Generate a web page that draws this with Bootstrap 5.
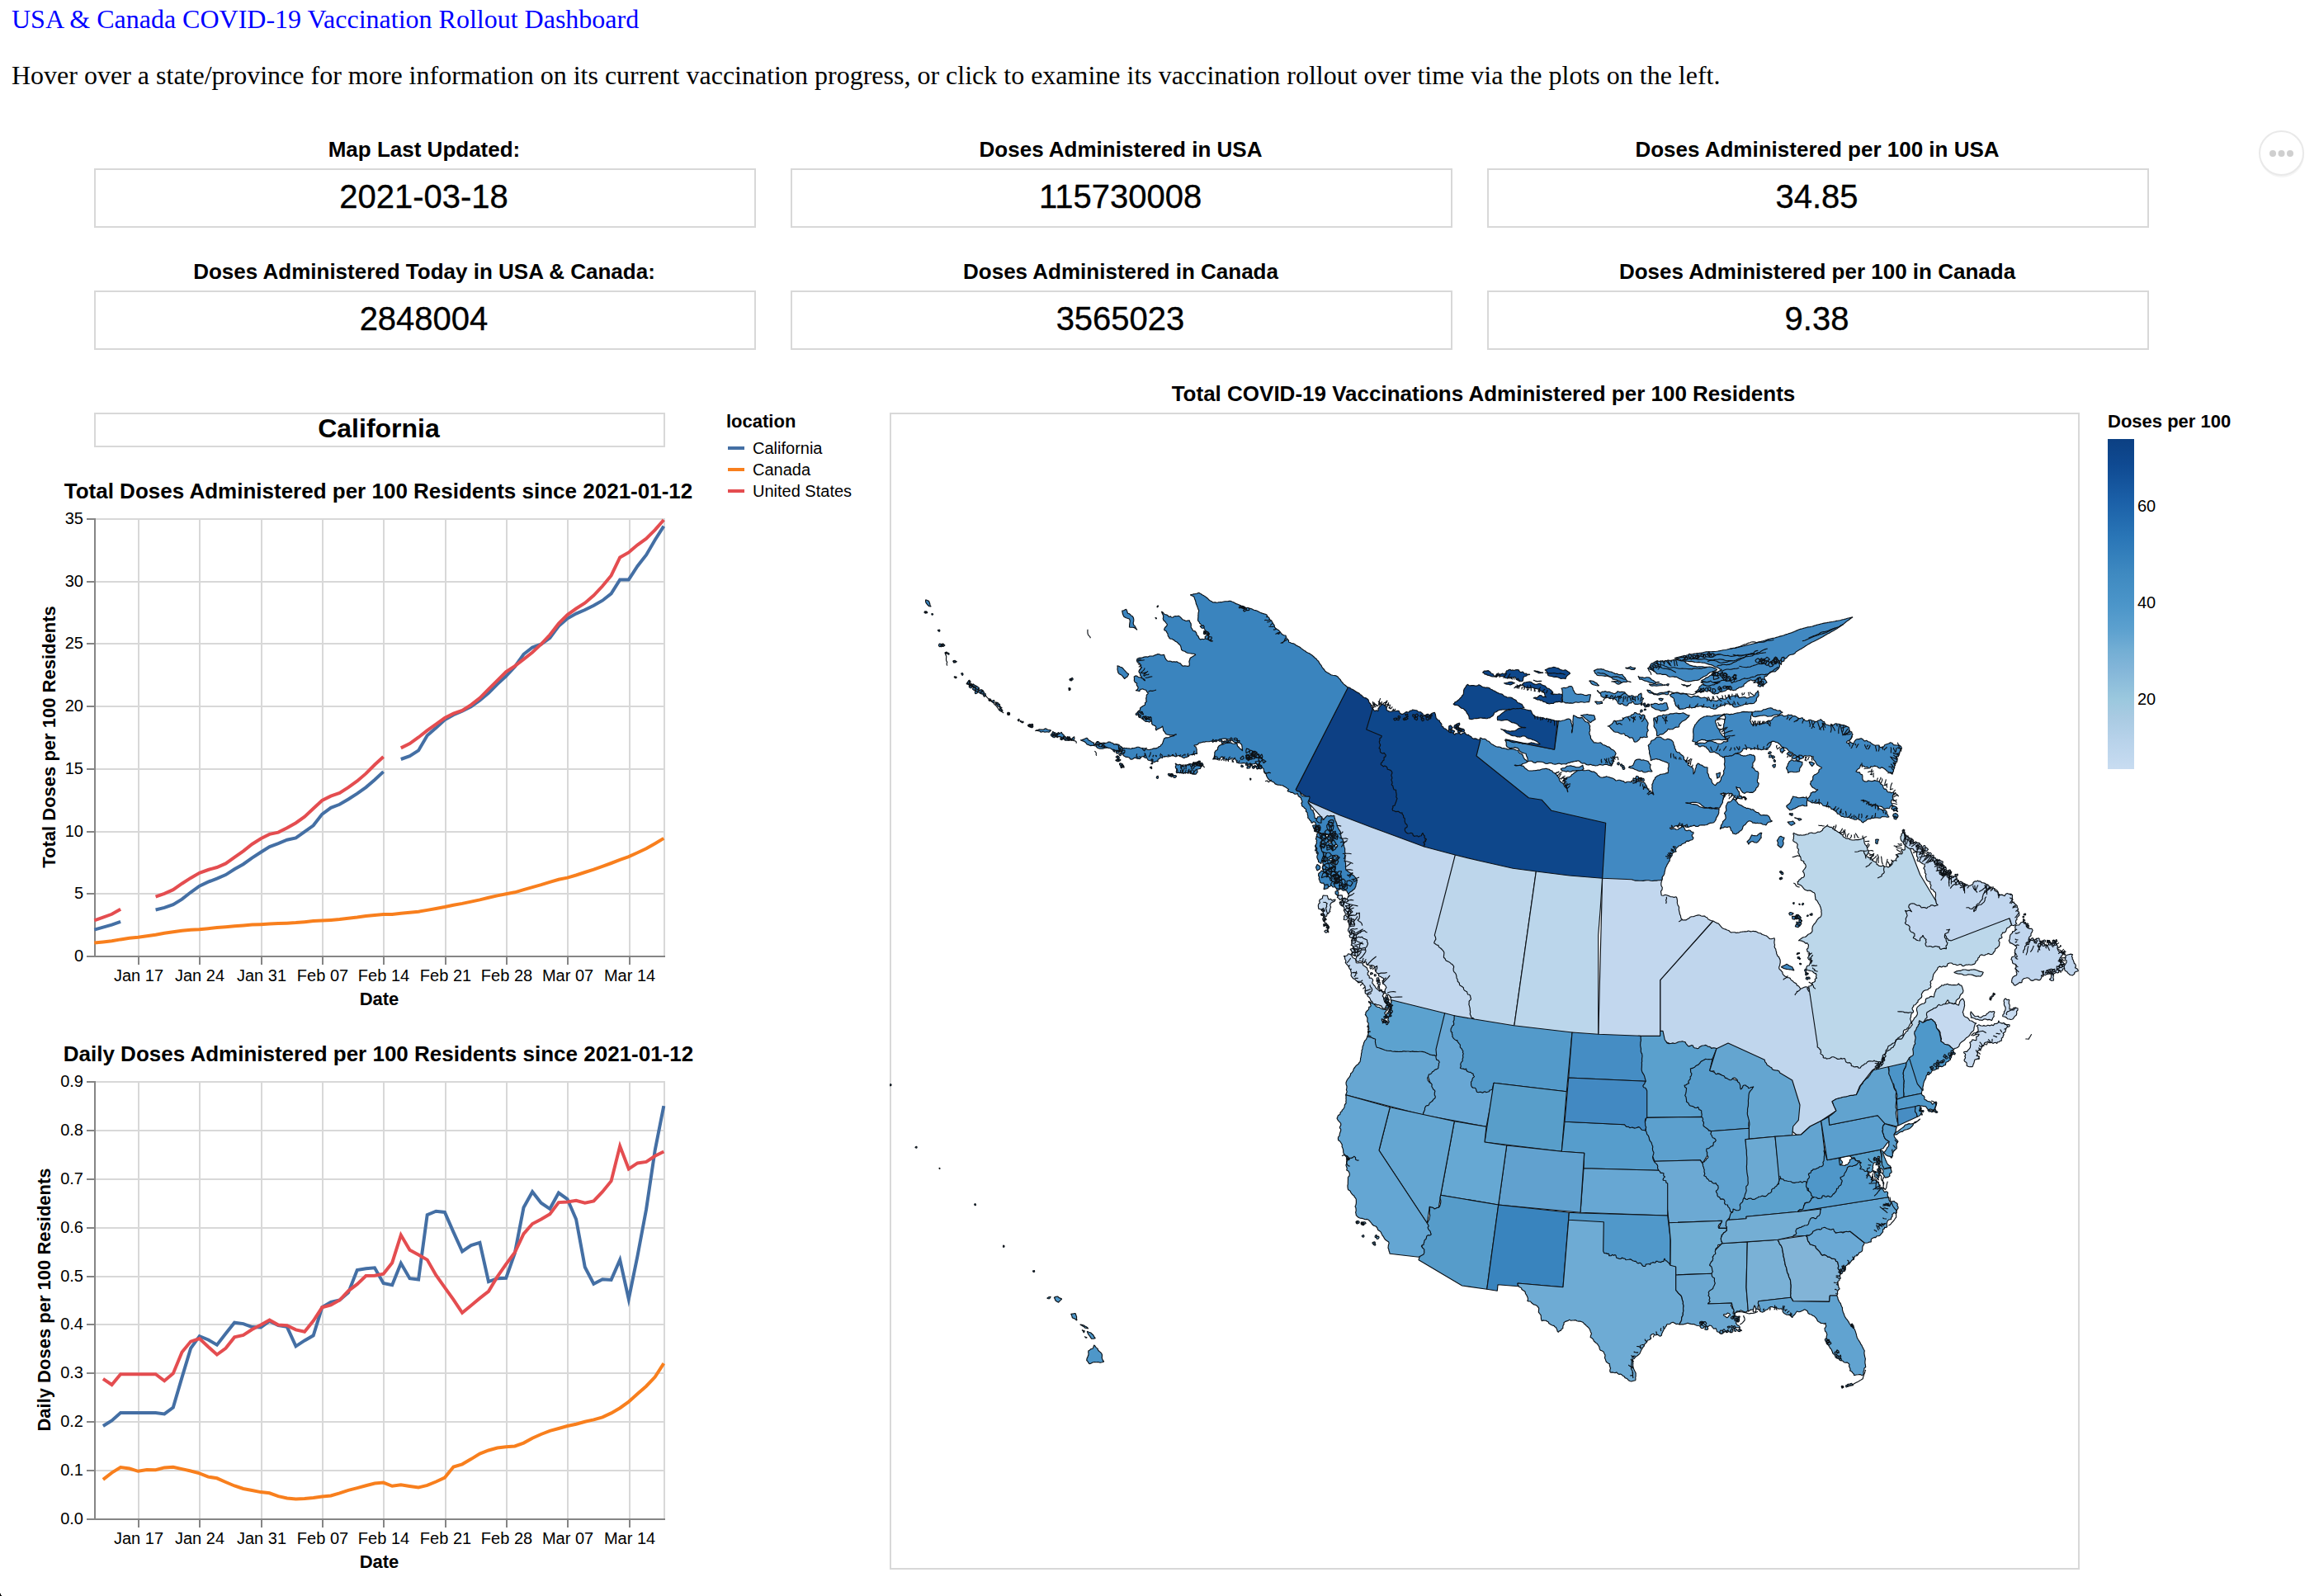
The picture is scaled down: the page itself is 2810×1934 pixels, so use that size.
<!DOCTYPE html>
<html lang="en">
<head>
<meta charset="utf-8">
<meta name="viewport" content="width=device-width, initial-scale=1">
<title>USA &amp; Canada COVID-19 Vaccination Rollout Dashboard</title>
<link rel="stylesheet" href="https://cdn.jsdelivr.net/npm/bootstrap@5.3.0/dist/css/bootstrap.min.css">
<style>
body{font-family:"Liberation Serif","Times New Roman",serif;font-size:32px;line-height:36px;color:#000;background:#fff;overflow:hidden}
.page{height:1934px;overflow:hidden}
.intro{padding:5px 14px 0;height:109px}
.intro a{color:#00f}
.sans{font-family:"Liberation Sans",Helvetica,Arial,sans-serif}
.kpis{margin:57px 0 0 114px;width:2490px;display:grid!important;grid-template-columns:repeat(3,802px);column-gap:42px;row-gap:38px}
.kpi-title{font-size:26px;line-height:30px;font-weight:700;margin:0 2px 8px 0}
.kpi-box{height:72px;border:2px solid #d8d8d8;font-size:40px;line-height:44px;padding:10px 3px 0 0;-webkit-text-stroke:.35px #000}
.plots{margin-top:37px}
.left-col{width:870px;padding-top:39px}
.place-box{margin-left:114px;width:692px;height:42px;border:2px solid #d8d8d8;font-size:32px;line-height:34px;font-weight:700;padding-right:2px}
.key-col{width:208px;padding:37px 0 0 10px;font-size:20px;line-height:26px}
.key-title{font-size:22px;line-height:26px;font-weight:700}
.key-line{width:20px;height:4px;margin-left:2px;margin-right:10px}
.map-col{width:1442px}
.map-title{font-size:26px;line-height:30px;height:38px;margin-top:1px;font-weight:700;padding-right:3px}
.map-frame{width:1442px;height:1402px}
.scale-col{padding:37px 0 0 34px;font-size:20px;line-height:22px}
.scale-bar{width:32px;height:400px;background:linear-gradient(#0c4083 0,#0f4a92 8%,#1b60a8 19%,#2a76b7 30%,#3f8ac1 41%,#4b95c9 50%,#5da1cf 58%,#73aed4 64%,#84b6d9 70%,#9bc8de 79%,#a8cae2 84%,#b7d2ea 91%,#c8dcf1 100%)}
.scale-ticks{padding:70px 0 0 4px;gap:95px}
.menu-dots{position:absolute;left:2735px;top:157px;width:58px;height:60px}
.corner-mark{position:absolute;left:0;top:1930px;width:2px;height:4px;background:linear-gradient(to top right,#000 50%,transparent 50%)}
svg{display:block}
svg text{font-family:"Liberation Sans",Helvetica,Arial,sans-serif;fill:#000}
.ax{font-size:20px}
.axt{font-size:22px;font-weight:700}
.ttl{font-size:26px;font-weight:700}
</style>
</head>
<body>
<div class="page position-relative">
  <header class="intro d-flex flex-column">
    <a class="text-decoration-none" href="#">USA &amp; Canada COVID-19 Vaccination Rollout Dashboard</a>
    <p class="mb-0" style="margin-top:32px">Hover over a state/province for more information on its current vaccination progress, or click to examine its vaccination rollout over time via the plots on the left.</p>
  </header>

  <section class="kpis sans text-center">
    <div><div class="kpi-title">Map Last Updated:</div><div class="kpi-box">2021-03-18</div></div>
    <div><div class="kpi-title">Doses Administered in USA</div><div class="kpi-box">115730008</div></div>
    <div><div class="kpi-title">Doses Administered per 100 in USA</div><div class="kpi-box">34.85</div></div>
    <div><div class="kpi-title">Doses Administered Today in USA &amp; Canada:</div><div class="kpi-box">2848004</div></div>
    <div><div class="kpi-title">Doses Administered in Canada</div><div class="kpi-box">3565023</div></div>
    <div><div class="kpi-title">Doses Administered per 100 in Canada</div><div class="kpi-box">9.38</div></div>
  </section>

  <main class="plots sans d-flex align-items-start">
    <div class="left-col flex-shrink-0">
      <div class="place-box text-center">California</div>
      <svg id="total" width="870" height="698" viewBox="0 542 870 698"></svg>
      <svg id="daily" width="870" height="690" viewBox="0 1240 870 690"></svg>
    </div>
    <div class="key-col flex-shrink-0">
      <div class="key-title" style="margin-bottom:6px">location</div>
      <div class="d-flex align-items-center"><span class="key-line" style="background:#446fa4"></span>California</div>
      <div class="d-flex align-items-center"><span class="key-line" style="background:#f87f1d"></span>Canada</div>
      <div class="d-flex align-items-center"><span class="key-line" style="background:#e44d50"></span>United States</div>
    </div>
    <div class="map-col flex-shrink-0">
      <div class="map-title text-center">Total COVID-19 Vaccinations Administered per 100 Residents</div>
      <svg id="map" class="map-frame" viewBox="1078 500 1442 1402"></svg>
    </div>
    <div class="scale-col">
      <div class="key-title" style="margin-bottom:8px">Doses per 100</div>
      <div class="d-flex">
        <div class="scale-bar"></div>
        <div class="scale-ticks d-flex flex-column"><span>60</span><span>40</span><span>20</span></div>
      </div>
    </div>
  </main>

  <svg class="menu-dots" viewBox="2735 157 58 60">
    <circle cx="2765" cy="188" r="27" fill="#f5f5f5"/>
    <circle cx="2764.500" cy="185.500" r="26.500" fill="#fff" stroke="#e9e9e9" stroke-width="2"/>
    <g fill="#cfcfcf"><circle cx="2754" cy="186" r="4"/><circle cx="2764.500" cy="186" r="4"/><circle cx="2775" cy="186" r="4"/></g>
  </svg>
  <span class="corner-mark"></span>
</div>

<script>
// ---------- line charts ----------
const BLUE='#446fa4', ORANGE='#f87f1d', RED='#e44d50', _=null;
const total={
 ca:[2.1,2.3,2.5,2.75,_,_,_,3.7,3.87,4.12,4.55,5.1,5.6,5.93,6.2,6.5,6.95,7.35,7.85,8.3,8.75,9.0,9.3,9.45,9.95,10.45,11.35,11.87,12.13,12.55,13.0,13.5,14.1,14.75,_,15.75,16.0,16.45,17.65,18.25,18.9,19.3,19.6,19.95,20.45,21.05,21.75,22.4,23.15,24.15,24.7,24.95,25.45,26.4,27.0,27.4,27.7,28.05,28.45,29.0,30.12,30.12,31.2,32.1,33.3,34.4],
 cn:[1.05,1.12,1.2,1.33,1.43,1.5,1.6,1.7,1.83,1.93,2.03,2.1,2.13,2.2,2.27,2.33,2.4,2.45,2.5,2.53,2.57,2.6,2.63,2.67,2.73,2.8,2.83,2.88,2.94,3.02,3.1,3.2,3.27,3.33,3.33,3.42,3.48,3.55,3.67,3.8,3.93,4.08,4.2,4.35,4.5,4.67,4.83,4.97,5.1,5.3,5.5,5.7,5.92,6.12,6.27,6.47,6.7,6.92,7.17,7.43,7.7,7.95,8.27,8.6,9.0,9.42],
 us:[2.85,3.1,3.35,3.75,_,_,_,4.75,5.0,5.3,5.8,6.25,6.65,6.9,7.1,7.4,7.9,8.4,8.95,9.4,9.75,9.9,10.25,10.65,11.15,11.8,12.45,12.8,13.05,13.5,14.0,14.6,15.3,15.95,_,16.65,17.0,17.5,18.05,18.55,19.05,19.4,19.65,20.1,20.65,21.35,22.05,22.75,23.2,23.75,24.3,24.95,25.7,26.6,27.3,27.8,28.25,28.85,29.6,30.45,31.9,32.3,32.9,33.4,34.1,34.9]};
const daily={
 ca:[_,.191,.202,.218,.218,.218,.218,.218,.2158,.229,.291,.351,.376,.3685,.358,.381,.4038,.4015,.3947,.394,.4068,.398,.395,.355,.367,.3774,.4353,.446,.45,.4654,.512,.515,.5165,.485,.481,.526,.4947,.4925,.6256,.633,.631,.59,.5504,.563,.5684,.488,.4947,.4955,.5466,.6406,.673,.65,.638,.6707,.658,.6165,.518,.4835,.493,.4917,.533,.452,.541,.637,.7586,.8496],
 cn:[_,.081,.095,.106,.1035,.098,.101,.1005,.1055,.1065,.1025,.0985,.0937,.0865,.0835,.0755,.068,.062,.0585,.055,.053,.0465,.0425,.041,.0415,.0435,.046,.0475,.053,.059,.0635,.0685,.073,.0745,.0675,.07,.067,.0645,.069,.0765,.0847,.107,.1125,.123,.134,.141,.146,.148,.1495,.156,.166,.174,.181,.186,.191,.195,.2,.204,.209,.2175,.228,.241,.2575,.273,.292,.32],
 us:[_,.288,.276,.2977,.2977,.2977,.2977,.2977,.284,.299,.343,.365,.371,.354,.338,.351,.3737,.378,.3895,.399,.409,.399,.398,.389,.385,.4075,.435,.44,.45,.469,.4827,.5,.5005,.504,.527,.584,.553,.5436,.533,.5015,.476,.451,.424,.439,.454,.468,.498,.524,.548,.5865,.607,.6165,.627,.651,.652,.655,.65,.654,.673,.695,.767,.72,.732,.7346,.7466,.7556]};
const weeks=['Jan 17','Jan 24','Jan 31','Feb 07','Feb 14','Feb 21','Feb 28','Mar 07','Mar 14'];
function chart(id,data,top,max,step,dec,title,ytitle,ytx){
  const L=115,R=805,B=top+530,y=v=>B-v/max*530,x=d=>L+d*690/65;
  let s='';
  const ln=(a,b,c,d,col)=>`<path d="M${a} ${b}L${c} ${d}" stroke="${col}" stroke-width="2"/>`;
  const n=Math.round(max/step);
  for(let i=0;i<=n;i++)s+=ln(L,Math.round(y(i*step)),R+1,Math.round(y(i*step)),'#d8d8d8');
  weeks.forEach((w,i)=>{const X=Math.round(x(5+7*i));s+=ln(X,top,X,B,'#d8d8d8')});
  s+=ln(R,top,R,B,'#d8d8d8');
  for(let i=0;i<=n;i++){const Y=Math.round(y(i*step));s+=ln(105,Y,L,Y,'#858585')+`<text class="ax" x="101" y="${Y+6}" text-anchor="end">${(i*step).toFixed(dec)}</text>`}
  s+=ln(L,top-1,L,B+1,'#858585')+ln(L,B,R+1,B,'#858585');
  weeks.forEach((w,i)=>{const X=Math.round(x(5+7*i));s+=ln(X,B,X,B+10,'#858585')+`<text class="ax" x="${X}" y="${B+29.5}" text-anchor="middle">${w}</text>`});
  for(const [k,c] of [['ca',BLUE],['cn',ORANGE],['us',RED]]){
    let d='',pen=false;
    data[k].forEach((v,i)=>{if(v===null){pen=false;return}d+=(pen?'L':'M')+(x(i)-.7).toFixed(1)+' '+(y(v)-.5).toFixed(1);pen=true});
    s+=`<path d="${d}" fill="none" stroke="${c}" stroke-width="4" stroke-miterlimit="10"/>`;
  }
  s+=`<text class="ttl" x="458.500" y="${top-25.500}" text-anchor="middle">${title}</text>`;
  s+=`<text class="axt" x="459.500" y="${B+59}" text-anchor="middle">Date</text>`;
  s+=`<text class="axt" transform="translate(${ytx} ${top+264}) rotate(-90)" text-anchor="middle">${ytitle}</text>`;
  document.getElementById(id).innerHTML=s;
}
chart('total',total,629,35,5,0,'Total Doses Administered per 100 Residents since 2021-01-12','Total Doses per 100 Residents',67);
chart('daily',daily,1311,.9,.1,1,'Daily Doses Administered per 100 Residents since 2021-01-12','Daily Doses per 100 Residents',61);

// ---------- choropleth ----------
// Outlines are digitised on sheets; each sheet has an origin and x/y scale.
const T=1/3,S=600/1568;
const sheets={A:[1070,680,S,T],C:[1560,800,T,T],N:[1740,730,S,T],Q:[2140,960,T,T],W:[1600,1180,T,T],E:[1980,1220,T,T],H:[1070,1300,T,T]};
// Coast noise is seeded by segment ends, so neighbours share the same border.
function rng(seed){let h=seed>>>0;return()=>{h=(Math.imul(h,1664525)+1013904223)>>>0;return h/4294967296}}
function wobble(a,b,amp){
  const flip=a[0]>b[0]||(a[0]===b[0]&&a[1]>b[1]),p=flip?b:a,q=flip?a:b;
  const r=rng(Math.round(p[0]*31+p[1]*977+q[0]*7919+q[1]*131));r();r();
  const out=[];
  (function go(u,v){const dx=v[0]-u[0],dy=v[1]-u[1],l=Math.hypot(dx,dy);
    if(l<2.6){out.push(v);return}
    const k=amp*(r()*2-1),m=[(u[0]+v[0])/2-dy*k,(u[1]+v[1])/2+dx*k];go(u,m);go(m,v)})(p,q);
  if(!flip)return out;
  out.pop();out.reverse();out.push(b);return out;
}
function trace(str,closed){
  let sh=sheets.C,amp=0,prev=null,first=null,pts=[];
  for(const t of str.trim().split(/\s+/)){
    if(t[0]==='@'){sh=sheets[t[1]];continue}
    if(t[0]==='~'){amp=+t.slice(1);continue}
    const [x,y]=t.split(',').map(Number),p=[+(sh[0]+x*sh[2]).toFixed(1),+(sh[1]+y*sh[3]).toFixed(1)];
    if(!prev){pts.push(p);first=p}else if(amp)pts.push(...wobble(prev,p,amp));else pts.push(p);
    prev=p;
  }
  if(closed&&amp)pts.push(...wobble(prev,first,amp));
  return 'M'+pts.map(p=>p[0].toFixed(1)+' '+p[1].toFixed(1)).join('L')+(closed?'Z':'');
}
const AK='#3a84be',NU='#4189c2',NT='#0e478b',YT='#0d4084',BC='#c2d7ee',NL='#c1d6ee',QC='#bcd7ea',HI='#4e97c9';
let out='';
const area=(c,s)=>{out+=`<path fill="${c}" d="${trace(s,true)}"/>`};
const line=s=>{out+=`<path fill="none" d="${trace(s,false)}"/>`};
// Small islets strewn round a track: n pieces of size z, spread w
function islets(c,s,n,z,w){
  const m=trace(s,false).slice(1).split('L').map(p=>p.split(' ').map(Number)),r=rng(n*97+m[0][0]*13);let d='';
  for(let i=0;i<n;i++){
    const t=(i+r())/n*(m.length-1),k=Math.min(m.length-2,Math.floor(t)),f=t-k;
    const cx=m[k][0]+(m[k+1][0]-m[k][0])*f+(r()-.5)*w,cy=m[k][1]+(m[k+1][1]-m[k][1])*f+(r()-.5)*w;
    const e=5+Math.floor(r()*4);
    for(let j=0;j<e;j++){const a=j/e*6.283,q=z*(.3+r()*.9);d+=(j?'L':'M')+(cx+Math.cos(a)*q).toFixed(1)+' '+(cy+Math.sin(a)*q).toFixed(1)}
    d+='Z';
  }
  out+=`<path fill="${c}" d="${d}"/>`;
}
// Narrow inlets: short strokes leaving a track on side k
function inlets(s,n,len,k){
  const m=trace(s,false).slice(1).split('L').map(p=>p.split(' ').map(Number)),r=rng(n*31+m[0][1]*17);let d='';
  for(let i=0;i<n;i++){
    const t=(i+r())/n*(m.length-1),j=Math.min(m.length-2,Math.floor(t)),dx=m[j+1][0]-m[j][0],dy=m[j+1][1]-m[j][1],l=Math.hypot(dx,dy)||1;
    let x=m[j][0]+dx*(t-j),y=m[j][1]+dy*(t-j);d+=`M${x.toFixed(1)} ${y.toFixed(1)}`;
    const q=len*(.4+r()*.8)/3,tilt=(r()-.5)*1.4;
    for(let e=0;e<3;e++){x+=(-dy/l*k+dx/l*tilt)*q+(r()-.5)*2;y+=(dx/l*k+dy/l*tilt)*q+(r()-.5)*2;d+=`L${x.toFixed(1)} ${y.toFixed(1)}`}
  }
  out+=`<path fill="none" d="${d}"/>`;
}

// Canada, south
area(BC,'@C ~0 60,500 200,540 610,690 700,730 700,1330 375,1260 ~.3 375,1233 360,1190 330,1140 300,1110 270,1095 240,1065 245,1010 225,965 210,920 195,880 222,850 ~0 150,600');
inlets('@C 375,1233 330,1140 270,1095 240,1065',14,12,1);
inlets('@C 240,1065 245,1010 225,965 205,910 222,850',16,12,1);
line('@C ~.3 245,1010 290,1025 285,1055 262,1045');line('@C ~.3 225,930 262,918 255,945 272,965');line('@C ~.3 250,1000 290,990');
islets(BC,'@C 190,860 215,900 225,960 240,1010 238,1065',24,3.5,7);
islets(BC,'@C 300,1125 330,1170 365,1225 372,1270',15,2.2,6);
area(BC,'@C ~.25 205,1075 235,1075 250,1100 290,1120 310,1160 350,1210 362,1250 355,1270 325,1255 290,1215 250,1165 225,1120');
inlets('@C 215,1100 250,1165 290,1215',12,6,-1);line('@C ~.2 290,1215 305,1205 300,1180');
area(BC,'@C ~.35 118,870 130,855 150,870 175,870 155,890 150,920 150,990 135,950 125,910');
line('@C ~.3 130,880 145,885 140,905 150,920');islets(BC,'@C 125,900 148,985',12,1.8,4);
area('#c0d6ed','@N ~.15 877,1158 900,1175 935,1200 @Q 10,530 30,530 35,570 47,600 47,640 70,670 100,690 125,715 150,708 ~0 250,800 400,950 430,980 385,1012 340,1070 328,1100 255,1115 240,1125 255,1158 195,1198 @E 710,400 640,435 607,465 590,465 578,455 560,440 500,300 300,200 95,120 @C 1355,1163');
line('@Q ~.2 125,715 105,738');line('@Q ~.2 80,668 62,682');line('@Q ~.2 150,710 165,742');
area('#c2d7ee','@C ~0 1145,785 @N 716,1000 ~.15 716,1008 714,1065 760,1070 770,1110 782,1155 820,1140 877,1158 ~0 @C 1355,1163 1355,1375 1130,1370');
line('@N ~.2 730,1070 728,1095');line('@N ~.2 782,1152 768,1160');
area('#bdd6eb','@C ~0 610,700 905,760 823,1340 680,1310 ~.2 665,1280 665,1220 640,1190 612,1140 575,1090 560,1050 533,1028 535,1000 ~0 610,708');
area('#bbd6eb','@C ~0 905,760 1145,785 1138,900 1130,1000 1130,1370 823,1340');
// Quebec and the Atlantic provinces
area(QC,'@Q ~.15 100,148 160,148 205,138 220,123 250,138 270,150 300,168 355,165 360,190 370,210 ~.4 375,240 400,255 425,265 450,270 475,250 492,225 495,180 500,145 ~0 560,300 650,450 885,460 893,483 ~.25 860,510 845,540 830,580 770,608 700,628 610,660 597,690 597,712 565,735 545,770 535,800 520,850 500,885 515,868 530,835 548,795 580,755 620,715 660,697 700,695 715,715 705,740 690,765 660,755 ~0 600,850 560,950 500,1000 400,1008 ~.3 415,980 385,978 345,998 310,995 290,980 265,970 225,968 187,918 ~0 155,705 ~.4 175,690 180,660 160,620 150,580 118,540 ~.12 165,510 200,450 195,410 175,365 115,335 ~.3 135,310 145,270 125,235 120,225 115,190 100,165');
inlets('@Q 220,123 270,150 300,168 355,165 370,210 380,245',20,6,-1);inlets('@Q 150,580 160,620 180,660',10,5,-1);inlets('@Q 360,240 400,255 450,270 492,225 495,180',16,8,-1);
line('@Q ~.15 322,217 368,212');line('@Q ~.2 430,268 430,290 405,312');line('@Q ~.2 362,272 385,255');line('@Q ~.1 478,797 530,800');line('@Q ~.2 125,235 95,236');line('@Q ~.2 190,120 212,122');
line('@Q ~.25 500,885 470,905 435,950 430,970 400,1005');line('@Q ~.25 500,885 472,900 440,935 425,965 395,1000');islets(QC,'@Q 435,960 400,1000',8,2,4);line('@Q ~.3 100,330 122,345');line('@Q ~.3 155,690 180,715');
area(NL,'@Q ~.3 500,135 520,165 560,190 590,230 630,245 655,290 710,325 740,340 800,335 830,350 845,370 890,370 910,410 920,440 900,485 893,483 ~0 885,458 672,540 ~.25 650,515 655,540 655,570 620,560 580,555 570,520 560,540 535,530 540,515 505,475 510,455 505,430 530,435 520,410 565,420 600,410 625,410 610,360 585,320 577,262 550,250 545,215 520,205 500,180');
inlets('@Q 500,145 560,190 590,230 630,245 655,290 710,325',38,11,1);inlets('@Q 710,325 740,340 800,335 830,350',14,9,1);inlets('@Q 890,370 920,440',8,6,1);
islets(NL,'@Q 505,150 560,200 600,235 640,270 660,298 710,328',34,2.2,6);islets(NL,'@Q 630,295 670,292',12,2,4);
line('@Q ~.2 828,345 790,370 765,410 755,435 765,420 800,380');line('@Q ~.2 727,420 765,418');line('@Q ~.2 830,350 845,385 850,370');line('@Q ~.2 650,515 668,498 655,500');
area(NL,'@Q ~.3 905,490 935,460 945,480 940,560 960,535 1010,555 1055,535 1060,570 1090,580 1070,620 1085,630 1100,590 1115,590 1135,650 1110,665 1085,640 1060,650 1045,685 1030,680 1040,655 1000,665 930,685 905,703 893,685 905,640 905,590');
inlets('@Q 940,560 1010,555 1055,535 1090,580 1085,640',24,8,1);inlets('@Q 1000,650 1060,640',12,7,1);inlets('@Q 905,490 905,650',10,4,-1);
islets(NL,'@Q 945,540 1010,550 1055,545',16,2,6);islets(NL,'@Q 1070,600 1080,640 1010,650',13,2.4,5);islets(NL,'@Q 935,435 940,470 955,492',6,1.5,2);
area(QC,'@Q ~.1 683,655 720,645 790,655 780,670 720,665');
area('#c5d9ef','@Q ~.15 585,800 610,785 650,770 700,775 715,750 715,800 740,830 765,840 750,870 715,905 682,935 665,920 635,905 615,838 600,825 570,838 585,820');
area('#c8dbf0','@Q ~.3 765,850 800,850 845,830 885,845 870,870 820,910 785,925 775,970 750,998 720,975 718,945 740,910 775,880 750,885');
inlets('@Q 885,845 820,910 785,925 775,970',18,5,1);line('@Q ~.2 745,885 800,875');
area('#c8dbf0','@Q ~.2 870,750 885,755 885,790 915,785 910,810 885,825 860,815 865,770');line('@Q ~.3 910,785 875,810');
area('#c8dbf0','@Q ~.2 745,797 760,815 800,810 830,797 820,830 780,828 745,820');
line('@Q ~.1 943,897 955,898 965,880');islets(NL,'@Q 815,755 828,730',4,1.6,2);

// Arctic
area(NU,'@N ~.15 140,492 200,525 275,555 290,580 248,592 300,612 375,620 390,640 418,690 405,640 450,605 485,610 520,635 570,648 630,645 660,655 690,700 688,650 735,620 738,585 680,575 672,520 700,490 745,500 760,540 ~.3 790,575 812,600 ~.12 815,625 830,585 860,600 865,635 885,665 900,650 915,600 915,550 ~.25 950,550 1005,555 1000,600 1020,640 990,690 950,670 985,715 930,695 900,695 ~.1 915,705 897,748 850,745 833,730 790,728 840,745 897,752 880,800 835,810 ~.3 740,820 815,835 815,855 765,890 740,940 ~.1 716,1000 716,1008 620,1007 ~0 527,1003 500,900 200,750 120,600 127,557');
inlets('@N 740,565 790,575 812,600',12,5,-1);inlets('@N 375,620 400,650 415,680',14,6,-1);inlets('@N 815,815 740,820',9,5,1);inlets('@N 760,890 740,930',12,5,1);inlets('@N 630,640 690,690',10,5,1);inlets('@N 905,690 985,710',12,6,1);
area(NU,'@N ~.2 925,725 945,715 970,740 1025,770 1065,795 1045,810 990,795 965,830 940,840 930,815 900,825 915,790 918,745');
area(NU,'@N ~.2 985,870 1000,845 1032,838 1020,870 990,880');area(NU,'@N ~.15 1080,865 1092,850 1103,855 1100,880 1092,892 1082,882');
area(NU,'@N ~.2 543,450 565,430 600,418 660,410 672,440 670,490 630,508 580,475');line('@N ~.3 565,430 590,445');inlets('@N 590,418 665,412',8,6,1);
area(NU,'@N ~.15 690,420 720,408 803,410 770,452 735,460 700,485 690,450');inlets('@N 690,420 740,412',5,7,1);
area(NU,'@N ~.2 610,600 640,570 680,590 685,615 640,612');islets(NU,'@N 630,640 655,648',5,2.4,3);islets(NU,'@N 575,580 595,610',4,1.8,5);
area(NU,'@N ~.1 915,405 850,415 815,460 812,505 850,512 925,500 895,460 885,430 920,405 1000,398 ~.25 1005,445 1060,430 1075,415 1130,415 1190,430 1240,445 1300,450 1320,480 1300,510 1390,520 1475,530 1460,580 1445,625 1400,600 1345,590 1330,615 1400,650 1450,690 1445,740 1400,740 1345,720 1435,780 1390,783 ~.2 1315,785 1260,755 1200,730 1170,715 1210,680 1185,660 1222,600 1195,560 1140,560 1065,505 1050,535 950,548 870,545 820,515 925,505');
inlets('@N 1110,412 1190,430 1240,440 1300,448 1320,490',24,9,1);inlets('@N 1300,510 1390,520 1475,530 1460,580 1445,625',30,7,1);inlets('@N 1345,595 1400,650 1450,690 1445,740',22,6,-1);inlets('@N 1390,783 1315,785 1260,755 1170,715',24,5,1);inlets('@N 1060,505 1140,560 1195,560',14,6,1);inlets('@N 890,420 895,460 925,500',10,9,-1);inlets('@N 1000,430 1060,432',12,7,1);inlets('@N 870,540 1050,535',14,5,-1);inlets('@N 1345,722 1430,775',8,5,-1);
islets(NU,'@N 1060,540 1070,590',5,2.2,4);islets(NU,'@N 1090,530 1190,580',6,4,5);islets(NU,'@N 1450,735 1460,790',4,3.5,3);
area(NU,'@N ~.15 1000,398 1060,383 1098,400 1050,415 1005,415');
area(NU,'@N ~.15 1110,605 1125,572 1160,580 1150,615 1115,620');area(NU,'@N ~.15 1110,740 1130,705 1175,710 1175,740 1120,755');
area(NU,'@N ~.1 1113,798 1130,795 1137,803 1125,811');area(NU,'@N ~.1 1135,782 1158,788 1150,793');islets(NU,'@N 1120,770 1130,770',2,1.6,1);
area(NU,'@N ~.1 1392,862 1402,862 1398,878 1392,875');
area(NU,'@N ~.15 388,430 425,425 430,475 435,410 485,440 500,510 570,550 555,595 450,575 390,585 290,578 285,550 225,525 218,500 ~0 375,535');
area(NU,'@N ~.1 458,410 500,410 505,425 490,437');inlets('@N 520,570 575,560 555,595',12,6,1);
area(NU,'@N ~.15 395,605 420,595 465,592 468,605 440,612 410,615');
area(NU,'@N ~.12 400,335 397,312 430,305 440,330 490,335 485,362 400,362');
area(NU,'@N ~.25 510,320 560,330 590,325 650,330 650,370 600,375 560,350');inlets('@N 530,335 650,345',18,7,1);
area(NU,'@N ~.2 680,370 730,365 735,388 690,385');area(NU,'@N ~.1 503,360 525,360 527,367 510,370');
area(NU,'@N ~.2 740,335 770,330 850,345 940,340 1020,320 1015,350 980,370 900,378 770,388 755,360');inlets('@N 770,388 900,378 980,370',14,5,-1);inlets('@N 850,345 1000,325',16,6,1);
area(NU,'@N ~.03 755,203 925,170 1100,120 1320,53 1270,95 1190,145 1140,180 ~.2 1100,205 1085,240 1040,270 1040,300 930,315 820,325 870,292 ~.08 840,285 870,265 905,245 850,220');
line('@N ~.08 760,203 1010,185');line('@N ~.1 860,215 950,210 1050,168');line('@N ~.08 930,168 1070,135');line('@N ~.05 1180,130 1265,92');line('@N ~.05 1160,140 1290,80');line('@N ~.1 890,232 950,215 1045,182');line('@N ~.1 900,250 960,238');line('@N ~.1 940,190 1020,175');line('@N ~.1 880,290 1010,270 1085,235');line('@N ~.1 960,232 1030,222 1100,212');line('@N ~.1 830,195 900,188');line('@N ~.1 780,208 850,205 940,212');
islets(NU,'@N 1020,220 1095,210',16,3.2,6);islets(NU,'@N 870,270 950,275',13,3.4,8);islets(NU,'@N 830,320 940,312',10,2.6,4);islets(NU,'@N 780,200 880,190',12,2.4,3);islets(NU,'@N 1020,285 1040,300',5,4,4);
area(NU,'@N ~.12 670,240 700,212 760,208 850,235 890,245 840,275 780,282 700,260');inlets('@N 670,240 700,212 760,208',18,9,1);line('@N ~.1 700,225 780,240 860,235');line('@N ~.1 690,235 760,255');
for(const s of ['500,248 560,255 590,262 618,290 560,280 510,265','640,268 670,272 708,290 690,295 645,280','485,285 500,287 517,302 500,300','668,318 740,322 735,335 690,335','600,237 632,238 628,244','555,288 588,292 575,297','675,297 738,296 735,303 685,304','777,298 808,298 795,307','705,350 720,350 715,358'])area(NU,'@N ~.15 '+s);
line('@N ~.1 740,325 810,335 850,325');line('@N ~.1 510,255 600,280');line('@N ~.1 600,330 560,345');
islets(NU,'@N 645,370 680,375 650,395',7,1.8,4);
area(NU,'@N ~.15 838,290 870,285 900,290 880,300 850,300');
// Foxe basin, Hudson Bay and James Bay islands
area(NU,'@N ~.1 888,622 900,618 898,635 890,640');islets(NU,'@N 1095,980 1090,1010',4,1.5,3);islets(NU,'@N 1125,1090 1165,1095',3,1.2,3);islets(NU,'@N 1130,1130 1150,1150 1140,1170',9,3,7);islets(NU,'@N 1175,1140 1195,1130',3,1.2,2);
area(NU,'@Q ~.05 55,635 75,625 95,635 102,648 70,642');islets(NU,'@Q 115,580 125,620',5,1.3,3);islets(NU,'@Q 140,650 155,680',5,1.8,4);
// Yukon and Northwest Territories
area(YT,'@C ~.15 220,98 265,125 310,175 ~0 345,275 450,450 510,600 497,678 400,642 300,605 190,563 80,515 75,500 30,472');
area(NT,'@C ~0 310,175 287,252 343,275 ~.3 333,320 358,345 340,380 380,440 383,530 427,580 427,615 492,628 497,678 ~0 610,708 700,730 820,757 905,768 1025,783 1145,793 1157,592 960,547 925,508 877,500 687,348 702,288 ~.25 645,262 630,270 590,258 560,240 535,190 500,202 440,190 385,185 360,180 345,160 330,185');
inlets('@C 310,175 345,160 385,185',20,6,-1);islets(NT,'@C 385,212 440,205 490,210 530,205',16,2.2,5);islets(NT,'@C 585,255 615,240 635,268',10,2.6,6);
area(NT,'@N ~.15 100,298 170,312 235,345 280,383 215,390 185,400 170,420 105,423 95,395 55,370 80,345');
area(NT,'@N ~.12 195,415 215,398 300,392 310,410 385,430 ~0 375,535 220,497 ~.12 330,515 310,500 250,485 205,460 285,455 195,428');
inlets('@N 310,410 385,430',10,6,1);
area(NT,'@N ~.3 148,255 230,245 298,262 275,285 225,275 180,270');inlets('@N 180,270 275,285',10,6,-1);
area(NT,'@N ~.12 345,245 410,245 425,258 410,278 355,265');line('@N ~.1 345,255 410,262');area(NT,'@N ~.1 310,248 340,256 325,257');area(NT,'@N ~.1 215,293 240,289 250,293 235,300');area(NT,'@N ~.1 308,283 335,286 320,288');
area(NT,'@N ~.2 247,312 285,290 330,295 350,310 372,335 400,337 400,362 345,362 308,348 350,345');inlets('@N 250,312 372,335',16,6,-1);

// Alaska
area(AK,'@A ~.05 1000,115 1045,150 1100,145 1150,170 1215,195 ~.2 1240,240 1275,270 1285,295 ~.08 1340,330 1400,400 1440,420 1472,460 ~0 1307,830 ~.2 1350,855 @C 75,515 85,540 100,575 135,575 145,565 170,565 ~.1 180,600 195,640 210,700 212,760 235,780 253,800 245,830 222,850 ~.3 180,835 140,820 130,740 110,680 105,615 80,580 50,520 0,475 @A ~.15 1285,830 1265,815 1230,800 1205,755 1190,730 1150,740 ~.25 1130,735 1100,720 1045,720 ~.15 1050,695 1085,660 1120,662 1138,690 1130,660 1085,645 1040,655 985,670 995,700 ~.25 940,710 890,710 800,715 755,690 700,680 665,670 ~.15 700,660 740,665 760,680 820,680 870,678 890,645 930,630 895,628 885,600 865,615 ~.25 850,580 805,550 835,510 840,480 800,470 795,420 830,435 810,400 805,355 ~.15 850,345 890,340 900,362 930,365 950,382 970,380 975,350 990,340 945,322 935,300 890,250 900,230 882,183 ~.2 930,200 970,215 975,240 1005,285 1045,290 1015,240 997,215 ~.05 1000,180 985,130 973,122');
inlets('@A 1130,735 1040,720',12,5,1);inlets('@A 990,705 890,710 800,715',22,4,1);inlets('@A 805,355 812,400 835,430',10,7,-1);inlets('@A 1215,195 1240,240 1285,290',10,6,1);islets(AK,'@A 1130,168 1155,175',6,2,4);islets(AK,'@A 1010,240 1035,285',7,2.6,4);
line('@A ~.2 840,475 865,468');line('@A ~.3 1205,765 1228,770');line('@A ~.3 1210,800 1230,795');
islets(AK,'@A 1140,710 1175,700 1200,740',20,3,9);islets(AK,'@A 1140,745 1200,745',10,2.2,5);islets(AK,'@A 1045,655 1130,650',10,2,4);
islets(AK,'@C 110,590 125,650 120,720 150,820',26,4.5,9);islets(AK,'@C 140,590 165,640 160,720 190,830',30,4.6,13);islets(AK,'@C 150,760 180,800 225,830',18,4,12);
islets('#fff','@C 150,640 170,690 150,760',8,2.2,8);inlets('@C 180,600 200,700 215,780 245,810',16,9,-1);
area(AK,'@C ~.2 105,640 125,650 130,700 122,740 112,700');
line('@A ~.2 820,678 828,690 835,678');
islets(AK,'@A 755,690 740,715 760,745',12,2.4,5);islets(AK,'@A 670,665 760,690',12,2.6,5);islets(AK,'@A 850,720 850,750',3,1.6,2);islets(AK,'@A 805,550 850,580',10,2,5);
area(AK,'@A ~.25 925,735 965,740 1000,728 1010,745 990,775 950,772 930,770');inlets('@A 930,770 990,775',12,6,-1);inlets('@A 940,740 1010,735',14,5,1);islets(AK,'@A 985,740 1012,738',9,2.4,5);islets(AK,'@A 905,775 925,782',4,2,2);islets(AK,'@A 867,783 868,784',1,2,1);islets(AK,'@A 1163,792 1164,793',1,1.2,1);
area(AK,'@A ~.1 742,380 760,390 778,410 765,428 748,410');area(AK,'@A ~.15 757,180 770,175 775,190 790,200 792,225 805,250 780,240 780,210 760,195');
line('@A ~.2 648,248 648,262 657,280');islets(AK,'@A 590,430 600,430',2,1.6,1);islets(AK,'@A 588,460 592,467',2,1.4,1);islets(AK,'@A 870,165 871,166',1,1.1,1);islets(AK,'@A 864,206 865,207',1,1.1,1);
area(AK,'@A ~.15 135,140 145,145 152,165 142,160');islets(AK,'@A 132,183 137,188',2,1.8,1);islets(AK,'@A 155,192 156,193',1,1,0);islets(AK,'@A 173,250 176,253',1,1.4,1);islets(AK,'@A 182,305 195,306',4,1.8,1);islets(AK,'@A 198,333 208,336',3,1.3,2);line('@A ~.15 198,335 200,355 203,380');islets(AK,'@A 226,364 229,366',2,2,0);islets(AK,'@A 228,422 235,422',2,1.2,1);islets(AK,'@A 250,411 252,412',1,1.4,0);
islets(AK,'@A 265,430 290,465 318,482',13,2.4,4);line('@A ~.1 318,483 350,515 382,552');islets(AK,'@A 335,502 362,515 378,548',9,1.8,2);islets(AK,'@A 395,553 399,555',2,1.8,1);islets(AK,'@A 426,577 442,586',3,1.4,1);islets(AK,'@A 460,596 475,599',5,1.6,2);
area(AK,'@A ~.2 482,617 500,612 515,608 532,615 525,622 500,622');islets(AK,'@A 530,630 565,638 605,648',16,2.6,4);area(AK,'@A ~.15 550,635 565,622 575,635 568,645');
area(AK,'@A ~.15 625,650 645,643 668,660 668,670 645,665');line('@A ~.3 590,640 612,662');line('@A ~.2 670,690 676,707');
area(AK,'@A ~.15 695,670 720,658 745,668 752,692 735,688 720,680');

// Mid-west first; later rows overlap their neighbours on the shared rivers
area('#5aa0cd','@E ~0 15,106 95,106 95,88 105,88 112,120 ~.25 160,128 230,152 300,152 ~0 285,190 250,400 45,403 20,300');
area('#5ca0ce','@E ~0 45,403 250,400 300,485 250,568 240,557 75,562 30,455');
area('#6ca9d3','@E ~0 75,562 240,557 248,568 300,640 370,740 340,775 337,805 308,805 320,778 127,785 110,640 60,595');
area('#579ccb','@E ~.1 205,225 260,190 285,190 ~0 275,232 435,290 ~.1 415,380 418,442 ~0 280,452 ~.25 250,405 245,378 190,335 183,285 205,260');
area('#64a5d0','@E ~0 300,152 342,132 475,193 ~.25 490,215 530,240 ~0 575,267 603,357 598,412 578,435 575,467 513,472 418,480 418,442 ~.06 412,385 420,310 435,290 ~.25 400,285 388,300 365,258 300,245 275,232 ~0 275,232');
area('#5fa2d0','@E ~0 280,452 418,442 418,480 405,482 425,640 430,700 385,750 350,745 ~.25 340,720 305,690 305,650 285,640 255,600 248,568 265,515 298,485');
area('#6ba9d2','@E ~0 405,482 513,472 530,632 500,690 440,720 400,695 ~.2 415,640 ~.03 410,560');
area('#63a4d0','@E ~0 513,472 575,467 607,465 640,435 680,415 692,520 700,600 640,680 560,660 528,632');
// Mountain and Pacific states
area('#68a7d4','@W ~0 452,143 487,152 700,400 630,420 603,556 372,513 400,400 350,250');
area('#66a6d2','@W ~.15 175,225 150,280 95,390 92,440 ~0 372,513 ~.2 400,397 390,385 433,322 420,298 ~0 260,200');
area('#5ca2cf','@W ~.15 175,100 205,120 240,130 ~.4 225,180 250,175 255,130 ~.1 258,95 ~0 452,143 420,275 422,298 ~.08 345,283 265,283 205,268 200,238 170,228 ~.3 175,180 175,130');
islets('#5ca2cf','@W 238,92 252,125 238,180',20,2.2,6);inlets('@W 170,190 172,225',7,5,-1);
area('#539aca','@W ~0 487,152 560,165 703,188 915,213 895,428 630,397 625,420 ~.25 555,415 530,345 508,343 520,290 482,232 477,195');
area('#589eca','@W ~0 630,397 895,428 877,646 597,612');
area('#569dcc','@W ~0 888,538 1105,548 1182,560 ~.15 1182,570 1205,620 1212,680 1230,715 ~0 957,707 959,652 877,646');
area('#458dc4','@W ~0 915,213 1010,220 1163,226 ~.1 1170,300 1183,391 ~0 902,378');
area('#4289c2','@W ~0 902,378 1183,391 ~.2 1172,408 1187,425 ~0 1187,523 ~.2 1182,570 1160,558 1125,560 1105,548 ~0 888,538');
area('#67a7d3','@W ~0 957,707 1230,715 ~.3 1248,725 1245,750 1262,762 ~0 1262,879 945,868');
area('#61a1cf','@W ~0 677,624 877,646 959,652 945,868 647,840');
area('#66a8d3','@W ~0 487,536 603,556 597,612 677,624 647,840 437,805');
area('#64a6d2','@W ~0 253,485 487,536 437,805 430,850 415,855 397,847 388,907 213,642');
area('#569cca','@W ~0 437,805 647,840 605,1147 515,1134 357,1040 360,1030 388,907 ~.1 397,847 415,855 430,850');
area('#64a6d3','@W ~.2 92,440 78,500 60,525 70,560 65,605 85,655 95,690 105,735 100,765 130,835 130,878 175,895 215,935 248,975 252,1018 ~0 357,1030 375,1020 ~.25 367,990 385,960 403,947 388,907 ~0 213,642 253,485');
line('@W ~.25 78,662 100,668 140,678');line('@W ~.25 100,665 95,680 107,700');islets('#64a6d3','@W 95,668 108,676',3,1.5,2);
islets('#64a6d3','@W 128,902 165,910',5,2.2,1);islets('#64a6d3','@W 154,952 157,954',1,1.6,0);islets('#64a6d3','@W 200,952 208,960',2,2,0);islets('#64a6d3','@W 192,975 198,988',2,2,0);
area('#3984be','@W ~0 647,840 904,868 882,1139 717,1125 720,1136 645,1130 643,1153 605,1147');
// South
area('#6eabd4','@W ~0 902,895 1030,890 1272,1050 @E 152,945 152,1030 ~.15 178,1080 165,1155 ~.3 110,1170 100,1195 40,1225 ~.1 0,1280 @W 1135,1400 1145,1478 ~.2 1130,1482 1055,1450 1035,1390 1000,1340 980,1295 950,1265 905,1258 885,1268 865,1303 805,1262 790,1210 735,1150 717,1125 ~0 882,1139');
inlets('@E 110,1170 40,1225 0,1275 -5,1350',18,5,1);line('@W ~.1 1130,1400 1137,1470');
area('#5098ca','@W ~0 904,868 945,870 1262,879 1272,960 1272,1060 ~.35 1220,1045 1190,1055 1150,1050 1110,1040 1075,1028 1028,1008 ~0 1030,902 902,895');
area('#71add3','@E ~0 320,860 412,855 408,1020 415,1105 ~.2 365,1118 ~0 355,1077 262,1080 270,970 280,900');
area('#70aed4','@E ~0 127,785 320,778 ~.2 308,805 ~0 337,805 ~.25 320,860 285,910 282,970 ~0 152,975 152,945 132,940 133,850');
area('#6ba8d2','@E ~0 152,975 282,970 ~.25 295,1005 268,1080 ~0 355,1077 ~.3 360,1115 385,1125 370,1150 392,1178 370,1165 325,1185 285,1165 240,1160 ~.08 195,1150 165,1155 ~.15 178,1080 152,1030 ~0 152,1000');
area('#fff','@E ~.2 325,1120 340,1113 350,1120 338,1130');islets('#6ba8d2','@E 245,1150 265,1160',5,2.4,5);islets('#6ba8d2','@E 310,1175 385,1170',9,2.2,6);line('@E ~.1 398,1122 402,1140 385,1155');islets('#6ba8d2','@E 355,1125 380,1140',7,2,5);
area('#7ab1d6','@E ~0 412,855 523,847 ~.1 567,990 570,1057 ~0 453,1070 ~.25 458,1105 440,1090 415,1108 ~0 408,1020');
area('#fff','@E ~.1 433,1110 438,1085 443,1108');line('@E ~.1 370,1112 450,1108');
area('#82b4d7','@E ~0 523,847 625,832 ~.25 660,870 700,905 750,972 740,1000 737,1050 ~0 712,1050 710,1072 578,1070 ~.1 570,1057 567,990');
area('#61a3d0','@E ~0 453,1070 570,1057 578,1070 710,1072 712,1050 737,1050 ~.08 760,1110 800,1170 838,1250 842,1310 ~.2 830,1340 800,1340 745,1280 700,1225 697,1150 660,1130 620,1100 575,1130 540,1100 490,1095 458,1108');
islets('#61a3d0','@E 700,1205 710,1225',4,2.2,3);islets('#61a3d0','@E 735,1255 750,1280',5,2.2,4);inlets('@E 458,1105 540,1100 575,1130',12,4,-1);islets('#61a3d0','@E 790,1150 797,1170',4,1.6,1);line('@E ~.05 842,1320 832,1352 800,1370 770,1383');islets('#61a3d0','@E 752,1385 800,1370',6,1.4,1);
area('#5ba1cd','@E ~.25 350,755 360,735 385,738 400,695 460,690 500,665 528,632 530,615 570,635 625,635 635,670 655,690 595,745 ~0 408,763 408,770 345,775');
area('#61a4d1','@E ~0 595,745 925,692 ~.3 955,750 920,800 870,840 862,855 ~.1 837,858 ~0 785,817 625,832 578,835');
inlets('@E 930,700 915,790 880,820',12,8,1);area('#fff','@E ~.3 905,718 935,715 930,725');line('@E ~.1 930,692 955,740 953,765 925,795');
area('#74aed4','@E ~0 345,775 408,770 408,763 595,745 680,735 ~.25 675,755 620,795 578,835 ~0 523,847 320,860 ~.25 337,805');
area('#6aa9d5','@E ~.15 625,832 660,812 725,808 733,823 785,817 ~0 837,858 ~.25 815,900 750,972 700,905 660,870');islets('#6aa9d5','@E 752,965 765,945',6,1.6,4);inlets('@E 815,900 750,972 737,1045',12,4,1);
// Mid-Atlantic and New England
area('#569dcd','@E ~0 595,745 925,692 ~.3 905,665 890,640 850,600 ~0 820,565 790,560 730,650 675,690 ~.2 655,690');
inlets('@E 905,670 890,635 850,600',8,11,-1);
area('#579fcb','@E ~0 745,550 895,520 910,590 935,585 ~.3 930,615 900,612 ~.4 885,550 870,575 890,630 850,600 820,560 800,548 750,577');
area('#fff','@E ~.2 885,545 893,560 890,590 900,620 905,660 915,665 910,615 897,600 893,545');islets('#579fcb','@E 880,545 888,600',8,1.8,5);inlets('@E 870,560 850,600 900,612',8,6,1);line('@E ~.1 922,635 916,662');
area('#4f97c9','@E ~0 692,520 702,557 745,550 748,575 ~.25 800,550 817,565 790,580 750,620 730,675 675,697 635,670 628,640 660,590 690,560');
area('#5b9fce','@E ~0 680,415 708,400 710,430 885,395 ~.15 912,425 905,460 928,490 895,520 ~0 702,557');
area('#61a3cf','@E ~0 710,430 708,400 ~.05 735,378 720,345 735,335 808,320 ~.08 825,285 870,230 ~0 925,218 ~.1 955,310 955,375 962,430 955,435 ~0 912,425 885,395');
area('#579ccb','@E ~0 912,425 955,438 ~.15 945,465 960,490 955,515 935,550 905,530 928,490 905,460');inlets('@E 960,490 935,550',7,3,1);
area('#579fcb','@E ~.1 895,520 905,525 935,585 910,590');
area('#4b94c8','@E ~0 925,218 990,203 ~.1 980,250 982,328 ~0 955,337 ~.1 935,265');
area('#559ccc','@E ~0 990,203 1000,187 1012,192 1048,300 1045,315 982,328 ~.1 980,250');
area('#4e98ca','@Q ~.1 557,830 570,838 600,825 615,838 635,905 665,920 682,935 ~.3 675,955 625,1000 590,1025 575,1050 ~.1 570,1085 ~0 550,1060 520,965 ~.15 535,955 542,900 540,870');
islets('#4e98ca','@Q 680,940 660,960 625,990 590,1022',16,2.2,5);
area('#5199ca','@E ~0 955,337 982,328 1045,315 ~.2 1055,335 1085,355 1098,345 1095,375 1070,375 1045,360 ~0 957,375');line('@E ~.15 1080,342 1095,348 1098,360 1090,375');islets('#5199ca','@E 1070,380 1100,382',5,1.6,3);
area('#478dc3','@E ~0 957,375 1022,362 1030,400 960,432');
area('#5199ca','@E ~.15 1022,362 1040,360 1045,390 1030,400');islets('#5199ca','@E 1040,370 1050,390',5,1.4,3);
area('#61a3cf','@E ~.15 945,465 965,448 985,430 1040,408 1010,435 985,448');
line('@E ~.2 875,205 895,208 910,185');

// Hawaii
area(HI,'@H ~.12 747,1010 762,1003 767,990 780,1003 794,1020 797,1040 803,1050 775,1052 750,1058 740,1045 745,1030');
area(HI,'@H ~.1 622,817 635,813 650,822 638,835 627,828');area(HI,'@H ~.1 683,877 700,875 705,900 688,890');area(HI,'@H ~.1 716,915 730,918 746,930 735,928');area(HI,'@H ~.1 723,935 733,938 730,945');area(HI,'@H ~.1 742,940 755,945 772,965 758,967 750,955');area(HI,'@H ~.1 733,959 742,962 738,964');area(HI,'@H ~.1 596,820 610,814 605,821');
for(const p of ['24,44 28,45','119,266 121,272','199,346 205,347','335,478 336,484','438,629 439,631','546,721 550,721'])islets(HI,'@H '+p,1,1.2,0);

document.getElementById('map').innerHTML=
 '<rect x="1079" y="501" width="1440" height="1400" fill="#fff" stroke="#d8d8d8" stroke-width="2"/>'+
 '<g stroke="#0c1116" stroke-width="1.15" stroke-linejoin="bevel">'+out+'</g>';
</script>
<script src="https://cdn.jsdelivr.net/npm/bootstrap@5.3.0/dist/js/bootstrap.bundle.min.js"></script>
</body>
</html>
